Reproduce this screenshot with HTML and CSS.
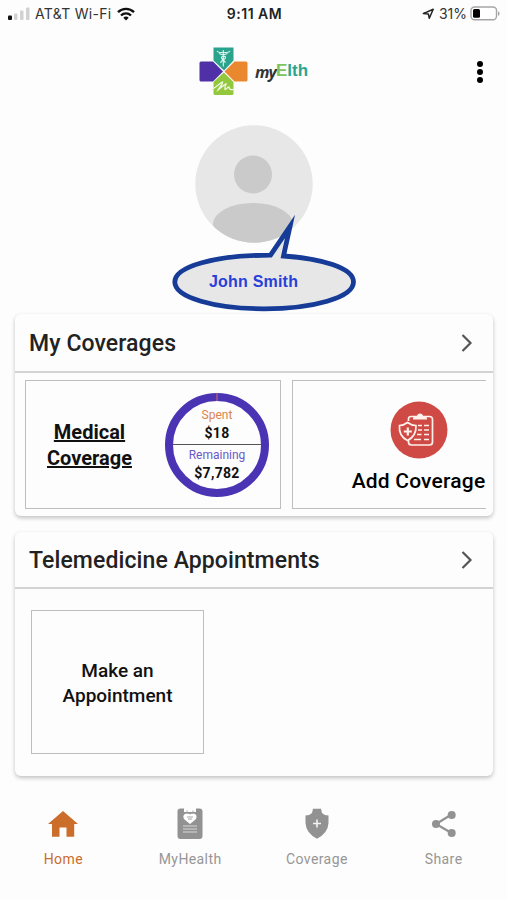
FILE: index.html
```html
<!DOCTYPE html>
<html lang="en">
<head>
    <meta charset="UTF-8">
    <meta name="viewport" content="width=device-width, initial-scale=1.0">
    <title>myElth</title>
    <link rel="stylesheet" href="styles.css">
</head>
<body>
    <div class="status-bar">
        <div class="status-left">
            <svg class="signal" width="22" height="14" viewBox="0 0 22 14">
                <rect x="0" y="8.5" width="4" height="4.5" rx="1" fill="#111"/>
                <rect x="6" y="6.5" width="3.5" height="6.5" rx="1" fill="#d2d2d2"/>
                <rect x="12" y="3.5" width="3.5" height="9.5" rx="1" fill="#d2d2d2"/>
                <rect x="18" y="0.5" width="3.5" height="12.5" rx="1" fill="#d2d2d2"/>
            </svg>
            <span class="carrier">AT&amp;T Wi-Fi</span>
            <svg class="wifi" width="18" height="14" viewBox="0 0 18 14" fill="none" stroke="#111" stroke-width="2.4">
                <path d="M1 5.2C5.5 .7 12.5 .7 17 5.2"/>
                <path d="M4 8.5C6.8 5.7 11.2 5.7 14 8.5"/>
                <path d="M9 13.5L6.3 10.7C7.8 9.2 10.2 9.2 11.7 10.7Z" fill="#111" stroke="none"/>
            </svg>
        </div>
        <div class="status-time">9:11 AM</div>
        <div class="status-right">
            <svg class="location" width="13" height="12" viewBox="0 0 13 12">
                <path d="M1.3 5.6L11.2 1.2L7.3 10.3L6.4 6.1Z" fill="none" stroke="#222" stroke-width="1.5" stroke-linejoin="round"/>
            </svg>
            <span class="percent">31%</span>
            <svg class="battery" width="31" height="15" viewBox="0 0 31 15">
                <rect x="1" y="1" width="25.5" height="12.8" rx="3.5" fill="#fff" stroke="#a5a5a5" stroke-width="1.4"/>
                <rect x="3" y="3" width="7" height="8.8" rx="1.5" fill="#000"/>
                <path d="M28 5.2C30 6 30 9 28 9.8Z" fill="#a5a5a5"/>
            </svg>
        </div>
    </div>

    <header class="app-header">
        <div class="logo">
            <svg width="50" height="50" viewBox="0 0 50 50">
                <path d="M14.5 1.5H34.5V14.5L25 24.5L14.5 14.5Z" fill="#2aa38c"/>
                <path d="M0.5 17Q.5 15.5 2 15.5H14L24 25.5L14 35.5H2Q.5 35.5 .5 34Z" fill="#4f30a6"/>
                <path d="M48.5 17Q48.5 15.5 47 15.5H35.5L25.5 25.5L35.5 35.5H47Q48.5 35.5 48.5 34Z" fill="#e9882f"/>
                <path d="M24.8 26.5L34.5 36V47.5Q34.5 49 33 49H16Q14.5 49 14.5 47.5V36Z" fill="#93c83d"/>
                <path d="M24.3 4V20.5M18 5C20 8 23 5.5 24.3 7C25.6 5.5 29 8 31 5M20 7.5L24 9L28.5 7.5M22 17C20.5 14.5 27.5 13.5 26.5 11C25.5 9.5 22 10 22.5 12C23 14 27 14.5 26 17" fill="none" stroke="#e4f5ef" stroke-width="1.1"/>
                <path d="M12 43.5C17 42 21 37 23.5 36C23.5 39 20 42 19 44C22 42 25 38.5 27 38C26.5 40 25 42.5 26 43.5C28 43 29 40.5 30 41C30 43.5 32 44 34.5 43.5" fill="none" stroke="#f1f8e4" stroke-width="1.3"/>
            </svg>
            <div class="logo-text"><span class="logo-my">my</span><span class="logo-e">E</span><span class="logo-lth">lth</span></div>
        </div>
        <div class="menu-dots"><i></i><i></i><i></i></div>
    </header>

    <section class="profile">
        <svg class="avatar" width="118" height="118" viewBox="0 0 118 118">
            <defs>
                <clipPath id="avatarClip"><circle cx="59" cy="59" r="58.7"/></clipPath>
            </defs>
            <circle cx="59" cy="59" r="58.7" fill="#e7e7e7"/>
            <circle cx="58" cy="49.5" r="19" fill="#cacaca"/>
            <ellipse cx="58" cy="99" rx="40" ry="21" fill="#cacaca" clip-path="url(#avatarClip)"/>
        </svg>
        <div class="bubble">
            <svg width="186" height="100" viewBox="0 0 186 100">
                <path d="M99.5 43.2L119 14.5L112.5 44C150 46.5 182.5 55.5 182.5 70C182.5 85.5 142 96.8 93 96.8C44 96.8 3.8 85.5 3.8 70C3.8 54.5 44 43.2 99.5 43.2Z" fill="#e7e7e7" stroke="#163c98" stroke-width="4.8" stroke-miterlimit="10"/>
            </svg>
            <span class="name">John Smith</span>
        </div>
    </section>

    <section class="card coverages">
        <div class="card-head">
            <h2>My Coverages</h2>
            <svg class="chevron" width="14" height="20" viewBox="0 0 14 20"><path d="M2.5 2L10.5 10L2.5 18" fill="none" stroke="#555" stroke-width="2.2"/></svg>
        </div>
        <div class="tiles">
            <div class="tile medical">
                <a class="medical-link">Medical<br>Coverage</a>
                <div class="ring">
                    <span class="tick"></span>
                    <span class="label spent">Spent</span>
                    <span class="amount">$18</span>
                    <span class="divider"></span>
                    <span class="label remaining">Remaining</span>
                    <span class="amount">$7,782</span>
                </div>
            </div>
            <div class="tile add">
                <svg width="58" height="58" viewBox="0 0 58 58">
                    <circle cx="29" cy="29" r="28.5" fill="#d04a45"/>
                    <g fill="none" stroke="#fff0ea" stroke-width="1.7">
                        <path d="M18.5 20V18Q18.5 15.5 21 15.5H39.5Q42.5 15.5 42.5 18.5V41Q42.5 44 39.5 44H21.5Q18.5 44 18.5 41V39"/>
                        <path d="M17.5 21.5Q21.5 24.5 26 24.5Q26.5 35 17.5 39.5Q8.5 35 9.5 24.5Q13.5 24.5 17.5 21.5Z"/>
                        <path d="M17.8 26.5V34.5M13.8 30.5H21.8" stroke-width="2.2"/>
                        <path d="M28 24.5H32M34 24.5H39M28 29H32M34 29H39M27 33.5H31.5M34 33.5H39M24 38.5H31M34 38.5H39" stroke-width="1.5"/>
                    </g>
                    <path d="M23 18.5V16.5L27 15C27 11.5 33 11.5 33 15L37 16.5V18.5Z" fill="#fff0ea"/>
                </svg>
                <span>Add Coverage</span>
            </div>
        </div>
    </section>

    <section class="card appointments">
        <div class="card-head">
            <h2>Telemedicine Appointments</h2>
            <svg class="chevron" width="14" height="20" viewBox="0 0 14 20"><path d="M2.5 2L10.5 10L2.5 18" fill="none" stroke="#555" stroke-width="2.2"/></svg>
        </div>
        <div class="appointment-tile">Make an<br>Appointment</div>
    </section>

    <nav class="tab-bar">
        <div class="tab active">
            <svg width="32" height="32" viewBox="0 0 32 32">
                <path d="M16 3L31 16H27.2V28.7H19.5V19.5H12.5V28.7H5V16H1Z" fill="#cb6d2b"/>
            </svg>
            <span>Home</span>
        </div>
        <div class="tab">
            <svg width="32" height="32" viewBox="0 0 32 32">
                <path d="M6.5 .5H10V4H22V.5H25.5Q28.5 .5 28.5 3.5V28Q28.5 31 25.5 31H6.5Q3.5 31 3.5 28V3.5Q3.5 .5 6.5 .5Z" fill="#929292"/>
                <path d="M11 .5H21V3H11Z" fill="#fdfdfd"/>
                <path d="M16 16L10.5 11.5C7.5 8 11 3.5 16 6.5C21 3.5 24.5 8 21.5 11.5Z" fill="#fff"/>
                <path d="M13 2.5V5.5H19V2.5M13 9H19M14 11H18" fill="none" stroke="#a5a5a5" stroke-width="1"/>
                <path d="M9 18H23M9 21H23M9 24H23" stroke="#d8d8d8" stroke-width="1.2"/>
            </svg>
            <span>MyHealth</span>
        </div>
        <div class="tab">
            <svg width="32" height="32" viewBox="0 0 32 32">
                <path d="M12 .8H20L21 5Q23.5 7.5 27.5 7.5V15Q27 25 16 30.7Q5 25 4.5 15V7.5Q8.5 7.5 11 5Z" fill="#929292"/>
                <path d="M16 11.5V19.5M12 15.5H20" stroke="#f2f2f2" stroke-width="1.6"/>
            </svg>
            <span>Coverage</span>
        </div>
        <div class="tab">
            <svg width="32" height="32" viewBox="0 0 32 32">
                <path d="M23.5 6.5L8 16L23.5 25" fill="none" stroke="#929292" stroke-width="2.2"/>
                <circle cx="23.7" cy="7" r="4" fill="#929292"/>
                <circle cx="8" cy="16" r="4" fill="#929292"/>
                <circle cx="23.7" cy="25" r="4" fill="#929292"/>
            </svg>
            <span>Share</span>
        </div>
    </nav>
</body>
</html>
```
FILE: styles.css
```css
* {
    box-sizing: border-box;
}
body {
    margin: 0;
    width: 507px;
    height: 900px;
    overflow: hidden;
    background: #fdfdfd;
    color: #111;
    font-family: Roboto, sans-serif;
}
svg {
    display: block;
    flex: none;
}

/* status bar */
.status-bar {
    display: grid;
    grid-template-columns: 1fr auto 1fr;
    align-items: center;
    height: 27px;
    padding: 0 6px 0 8px;
    font-family: Inter, sans-serif;
    font-size: 14px;
    color: #333;
}
.status-left, .status-right {
    display: flex;
    align-items: center;
}
.status-right {
    justify-content: flex-end;
}
.carrier {
    margin: 0 5px 0 5px;
    font-size: 14px;
    letter-spacing: 0.3px;
}
.status-time {
    font-size: 14px;
    font-weight: 600;
    letter-spacing: 0.5px;
    color: #222;
}
.percent {
    margin: 0 3px 0 4px;
}

/* header */
.app-header {
    display: grid;
    grid-template-columns: 1fr auto 1fr;
    height: 98px;
    padding: 19px 24px 0 24px;
}
.logo {
    grid-column: 2;
    display: flex;
    height: 50px;
}
.logo-text {
    display: flex;
    padding: 15px 0 0 6px;
    font-family: "Liberation Sans", sans-serif;
    font-size: 17px;
    line-height: 20px;
    font-weight: 700;
}
.logo-my {
    width: 21px;
    font-family: "Open Sans", sans-serif;
    font-size: 16px;
    line-height: 22px;
    font-style: italic;
    letter-spacing: -0.8px;
    color: #333;
}
.logo-e {
    color: #7cc35a;
}
.logo-lth {
    color: #2ba58e;
}
.menu-dots {
    display: flex;
    flex-direction: column;
    justify-self: end;
    gap: 2px;
    padding-top: 15px;
}
.menu-dots i {
    width: 6px;
    height: 6px;
    border-radius: 50%;
    background: #000;
}

/* profile */
.profile {
    position: relative;
    height: 189px;
}
.avatar {
    margin: 0 auto;
}
.bubble {
    position: absolute;
    left: 171px;
    top: 87px;
}
.name {
    position: absolute;
    left: 38px;
    top: 61px;
    font: bold 16px/18px "Liberation Sans", sans-serif;
    letter-spacing: 0.2px;
    white-space: nowrap;
    color: #2840d8;
}

/* cards */
.card {
    margin: 0 14px 0 15px;
    border-radius: 6px;
    background: #fdfdfd;
    box-shadow: 0 2px 4px rgba(0, 0, 0, 0.24);
}
.coverages {
    height: 202px;
}
.card-head {
    display: flex;
    align-items: center;
    justify-content: space-between;
    height: 59px;
    padding: 0 19px 0 14px;
    border-bottom: 2px solid #d3d3d3;
}
.card-head h2 {
    margin: 0;
    padding-top: 2px;
    font-size: 23px;
    font-weight: 500;
    letter-spacing: 0.1px;
    color: #222;
}
.tiles {
    display: flex;
    gap: 11px;
    margin: 7px 7px 0 10px;
    overflow: hidden;
}
.tile {
    flex: none;
    display: flex;
    align-items: center;
    width: 256px;
    height: 129px;
    border: 1.5px solid #bebebe;
}
.medical {
    justify-content: space-between;
    padding: 0 11px 0 21px;
}
.medical-link {
    font-size: 20px;
    line-height: 26px;
    font-weight: 700;
    text-align: center;
    text-decoration: underline;
    text-decoration-thickness: 1.5px;
}
.ring {
    position: relative;
    display: flex;
    flex-direction: column;
    align-items: center;
    width: 104px;
    height: 104px;
    padding-top: 6px;
    border: 8px solid #4b34b4;
    border-radius: 50%;
}
/* spent share of the ring */
.tick {
    position: absolute;
    left: 43px;
    top: -8px;
    width: 2px;
    height: 8px;
    background: #92508a;
}
.label {
    font-size: 12px;
    line-height: 17px;
}
.spent {
    color: #d9854f;
}
.remaining {
    margin-top: 2px;
    color: #6a58c8;
}
.amount {
    font-size: 14px;
    line-height: 19px;
    font-weight: 700;
    letter-spacing: 0.3px;
}
.divider {
    width: 100%;
    height: 1px;
    margin-top: 1px;
    background: #555;
}
.add {
    flex-direction: column;
    padding: 20px 3px 0 0;
    font-size: 21px;
    font-weight: 500;
    letter-spacing: 0.2px;
    color: #000;
}
.add span {
    margin-top: 10px;
}
.appointments {
    height: 244px;
    margin-top: 16px;
}
.appointments .card-head {
    height: 57px;
}
.appointment-tile {
    display: flex;
    align-items: center;
    justify-content: center;
    width: 173px;
    height: 144px;
    margin: 21px 0 0 16px;
    padding-top: 2px;
    border: 1.5px solid #bebebe;
    font-size: 19px;
    line-height: 25px;
    font-weight: 500;
    text-align: center;
}

/* bottom tabs */
.tab-bar {
    display: grid;
    grid-template-columns: repeat(4, 1fr);
    margin-top: 32px;
}
.tab {
    display: flex;
    flex-direction: column;
    align-items: center;
    gap: 11px;
    font-size: 14px;
    line-height: 17px;
    letter-spacing: 0.4px;
    color: #969696;
}
.active {
    color: #cb6d2b;
}
```
